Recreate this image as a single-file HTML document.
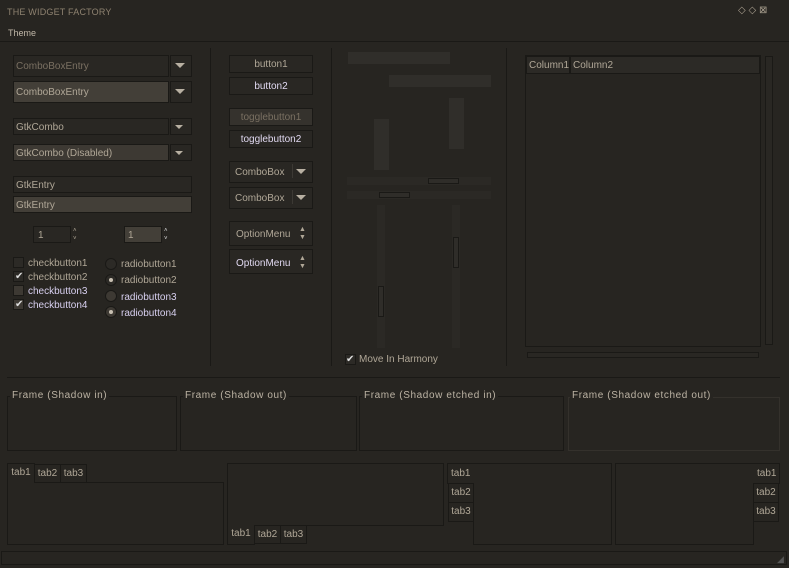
<!DOCTYPE html><html><head><style>
*{margin:0;padding:0;box-sizing:border-box}
body{width:789px;height:568px;background:#272521;font:10px "Liberation Sans",sans-serif;color:#b0a797;position:relative;overflow:hidden}
.a{position:absolute}
.bx{position:absolute;border:1px solid #1a1916;background:#292723}
.f{background:#433f38}
.t{position:absolute;white-space:nowrap;line-height:12px;padding-top:1px}
.arr{position:absolute;width:0;height:0;border-left:5px solid transparent;border-right:5px solid transparent;border-top:5px solid #b8b0a2}
.sep{position:absolute;background:#1a1916}
.chk{position:absolute;width:11px;height:11px;border:1px solid #1a1916;background:#2c2a26}
.rad{position:absolute;width:12px;height:12px;border-radius:50%;border:1px solid #1a1916;background:#2c2a26}
.dot{position:absolute;left:3px;top:3px;width:4px;height:4px;border-radius:50%;background:#c8c0b2}
.tr{position:absolute;background:#2b2925}
.fr{position:absolute;border:1px solid #1a1916}
.fl{position:absolute;background:#272521;padding:0 2px;font-size:10px;letter-spacing:.6px;color:#bcb3a4;top:-7px;line-height:12px}
.tab{position:absolute;border:1px solid #1a1916;background:#272521;font-size:10px;line-height:18px;text-align:center;color:#b0a797}
</style></head><body>
<div class="t" style="left:7px;top:5px;font-size:9px;color:#8e8270;letter-spacing:.2px">THE WIDGET FACTORY</div>
<div class="t" style="left:738px;top:4px;color:#a89e8e;font-size:10px">◇ ◇ ⊠</div>
<div class="t" style="left:8px;top:26px;font-size:9px;color:#c0b7a8">Theme</div>
<div class="sep" style="left:0;top:41px;width:789px;height:1px"></div>

<div class="bx" style="left:13px;top:55px;width:156px;height:22px"></div><div class="t" style="left:16px;top:60px;color:#7a7062">ComboBoxEntry</div>
<div class="bx" style="left:170px;top:55px;width:22px;height:22px"></div><div class="arr" style="left:175px;top:63px"></div>
<div class="bx f" style="left:13px;top:81px;width:156px;height:22px"></div><div class="t" style="left:16px;top:86px">ComboBoxEntry</div>
<div class="bx" style="left:170px;top:81px;width:22px;height:22px"></div><div class="arr" style="left:175px;top:89px"></div>

<div class="bx" style="left:13px;top:118px;width:156px;height:17px"></div><div class="t" style="left:16px;top:121px">GtkCombo</div>
<div class="bx" style="left:170px;top:118px;width:22px;height:17px"></div><div class="arr" style="left:175px;top:125px;border-width:4px 4px 0"></div>
<div class="bx f" style="left:13px;top:144px;width:156px;height:17px;background:#3d3933"></div><div class="t" style="left:16px;top:147px">GtkCombo (Disabled)</div>
<div class="bx" style="left:170px;top:144px;width:22px;height:17px"></div><div class="arr" style="left:175px;top:151px;border-width:4px 4px 0"></div>

<div class="bx" style="left:13px;top:176px;width:179px;height:17px"></div><div class="t" style="left:16px;top:179px">GtkEntry</div>
<div class="bx f" style="left:13px;top:196px;width:179px;height:17px"></div><div class="t" style="left:16px;top:199px">GtkEntry</div>

<div class="bx" style="left:33px;top:226px;width:38px;height:17px"></div><div class="t" style="left:38px;top:229px">1</div>
<div class="t" style="left:73px;top:226px;font-size:6px;line-height:8px">˄<br>˅</div>
<div class="bx f" style="left:124px;top:226px;width:38px;height:17px"></div><div class="t" style="left:128px;top:229px">1</div>
<div class="t" style="left:164px;top:226px;font-size:6px;line-height:8px;color:#ddd">˄<br>˅</div>

<div class="chk" style="left:13px;top:257px"></div><div class="t" style="left:28px;top:257px">checkbutton1</div>
<div class="chk" style="left:13px;top:271px"></div><div class="t" style="left:15px;top:270px;color:#ddd">✔</div><div class="t" style="left:28px;top:271px">checkbutton2</div>
<div class="chk" style="left:13px;top:285px;background:#3d3933"></div><div class="t" style="left:28px;top:285px;color:#d8d0f0">checkbutton3</div>
<div class="chk" style="left:13px;top:299px;background:#3d3933"></div><div class="t" style="left:15px;top:298px;color:#ddd">✔</div><div class="t" style="left:28px;top:299px;color:#d8d0f0">checkbutton4</div>

<div class="rad" style="left:105px;top:258px"></div><div class="t" style="left:121px;top:258px">radiobutton1</div>
<div class="rad" style="left:105px;top:274px"><div class="dot"></div></div><div class="t" style="left:121px;top:274px">radiobutton2</div>
<div class="rad" style="left:105px;top:290px;background:#3d3933"></div><div class="t" style="left:121px;top:291px;color:#d8d0f0">radiobutton3</div>
<div class="rad" style="left:105px;top:306px;background:#3d3933"><div class="dot"></div></div><div class="t" style="left:121px;top:307px;color:#d8d0f0">radiobutton4</div>

<div class="sep" style="left:210px;top:48px;width:1px;height:318px"></div>

<div class="bx" style="left:229px;top:55px;width:84px;height:18px"></div><div class="t" style="left:229px;width:84px;text-align:center;top:58px">button1</div>
<div class="bx" style="left:229px;top:77px;width:84px;height:18px"></div><div class="t" style="left:229px;width:84px;text-align:center;top:80px;color:#e0d8f0">button2</div>
<div class="bx" style="left:229px;top:108px;width:84px;height:18px;background:#35322d"></div><div class="t" style="left:229px;width:84px;text-align:center;top:111px;color:#7a7062">togglebutton1</div>
<div class="bx" style="left:229px;top:130px;width:84px;height:18px"></div><div class="t" style="left:229px;width:84px;text-align:center;top:133px;color:#e0d8f0">togglebutton2</div>
<div class="bx" style="left:229px;top:161px;width:84px;height:22px"></div><div class="t" style="left:235px;top:166px">ComboBox</div><div class="sep" style="left:292px;top:164px;width:1px;height:14px;background:#3c3934"></div><div class="arr" style="left:296px;top:169px"></div>
<div class="bx" style="left:229px;top:187px;width:84px;height:22px"></div><div class="t" style="left:235px;top:192px">ComboBox</div><div class="sep" style="left:292px;top:190px;width:1px;height:14px;background:#3c3934"></div><div class="arr" style="left:296px;top:195px"></div>
<div class="bx" style="left:229px;top:221px;width:84px;height:25px"></div><div class="t" style="left:236px;top:228px">OptionMenu</div><div class="t" style="left:299px;top:225px;font-size:7px;line-height:8px">▲<br>▼</div>
<div class="bx" style="left:229px;top:249px;width:84px;height:25px"></div><div class="t" style="left:236px;top:257px;color:#e0d8f0">OptionMenu</div><div class="t" style="left:299px;top:254px;font-size:7px;line-height:8px">▲<br>▼</div>

<div class="sep" style="left:331px;top:48px;width:1px;height:318px"></div>

<div class="a" style="left:348px;top:52px;width:102px;height:12px;background:#302e2a"></div>
<div class="a" style="left:389px;top:75px;width:102px;height:12px;background:#302e2a"></div>
<div class="a" style="left:374px;top:119px;width:15px;height:51px;background:#302e2a"></div>
<div class="a" style="left:449px;top:98px;width:15px;height:51px;background:#302e2a"></div>
<div class="tr" style="left:347px;top:177px;width:144px;height:8px"></div><div class="bx" style="left:428px;top:178px;width:31px;height:6px;background:#2f2d29"></div>
<div class="tr" style="left:347px;top:191px;width:144px;height:8px"></div><div class="bx" style="left:379px;top:192px;width:31px;height:6px;background:#2f2d29"></div>
<div class="tr" style="left:377px;top:205px;width:8px;height:143px"></div><div class="bx" style="left:378px;top:286px;width:6px;height:31px;background:#2f2d29"></div>
<div class="tr" style="left:452px;top:205px;width:8px;height:143px"></div><div class="bx" style="left:453px;top:237px;width:6px;height:31px;background:#2f2d29"></div>
<div class="chk" style="left:345px;top:354px"></div><div class="t" style="left:346px;top:353px;color:#ddd">✔</div><div class="t" style="left:359px;top:353px">Move In Harmony</div>

<div class="sep" style="left:506px;top:48px;width:1px;height:318px"></div>

<div class="bx" style="left:525px;top:55px;width:236px;height:292px;background:#272521"></div>
<div class="bx" style="left:526px;top:56px;width:44px;height:18px;background:#2c2a26"></div><div class="t" style="left:529px;top:59px">Column1</div>
<div class="bx" style="left:570px;top:56px;width:190px;height:18px;background:#2c2a26"></div><div class="t" style="left:573px;top:59px">Column2</div>
<div class="bx" style="left:765px;top:56px;width:8px;height:289px"></div>
<div class="bx" style="left:527px;top:352px;width:232px;height:6px"></div>

<div class="sep" style="left:7px;top:377px;width:773px;height:1px"></div>

<div class="fr" style="left:7px;top:396px;width:170px;height:55px"><div class="fl" style="left:2px">Frame (Shadow in)</div></div>
<div class="fr" style="left:180px;top:396px;width:177px;height:55px"><div class="fl" style="left:2px">Frame (Shadow out)</div></div>
<div class="fr" style="left:359px;top:396px;width:205px;height:55px"><div class="fl" style="left:2px">Frame (Shadow etched in)</div></div>
<div class="fr" style="left:568px;top:397px;width:212px;height:54px;border-color:#34312c"><div class="fl" style="left:1px;top:-8px">Frame (Shadow etched out)</div></div>

<div class="fr" style="left:7px;top:482px;width:217px;height:63px"></div>
<div class="tab" style="left:7px;top:463px;width:28px;height:20px;border-bottom:none">tab1</div>
<div class="tab" style="left:34px;top:464px;width:27px;height:19px">tab2</div>
<div class="tab" style="left:60px;top:464px;width:27px;height:19px">tab3</div>

<div class="fr" style="left:227px;top:463px;width:217px;height:63px"></div>
<div class="tab" style="left:227px;top:525px;width:28px;height:20px;border-top:none">tab1</div>
<div class="tab" style="left:254px;top:525px;width:27px;height:19px">tab2</div>
<div class="tab" style="left:280px;top:525px;width:27px;height:19px">tab3</div>

<div class="fr" style="left:473px;top:463px;width:139px;height:82px"></div>
<div class="a" style="left:447px;top:463px;width:27px;height:21px;background:#272521;border:1px solid #1a1916;border-right:none"></div>
<div class="t" style="left:451px;top:467px">tab1</div>
<div class="tab" style="left:448px;top:483px;width:26px;height:20px">tab2</div>
<div class="tab" style="left:448px;top:502px;width:26px;height:20px">tab3</div>

<div class="fr" style="left:615px;top:463px;width:139px;height:82px"></div>
<div class="a" style="left:753px;top:463px;width:27px;height:21px;background:#272521;border:1px solid #1a1916;border-left:none"></div>
<div class="t" style="left:757px;top:467px">tab1</div>
<div class="tab" style="left:753px;top:483px;width:26px;height:20px">tab2</div>
<div class="tab" style="left:753px;top:502px;width:26px;height:20px">tab3</div>

<div class="fr" style="left:1px;top:551px;width:786px;height:14px"></div>
<div class="t" style="left:777px;top:552px;color:#555;font-size:9px">◢</div>
</body></html>
